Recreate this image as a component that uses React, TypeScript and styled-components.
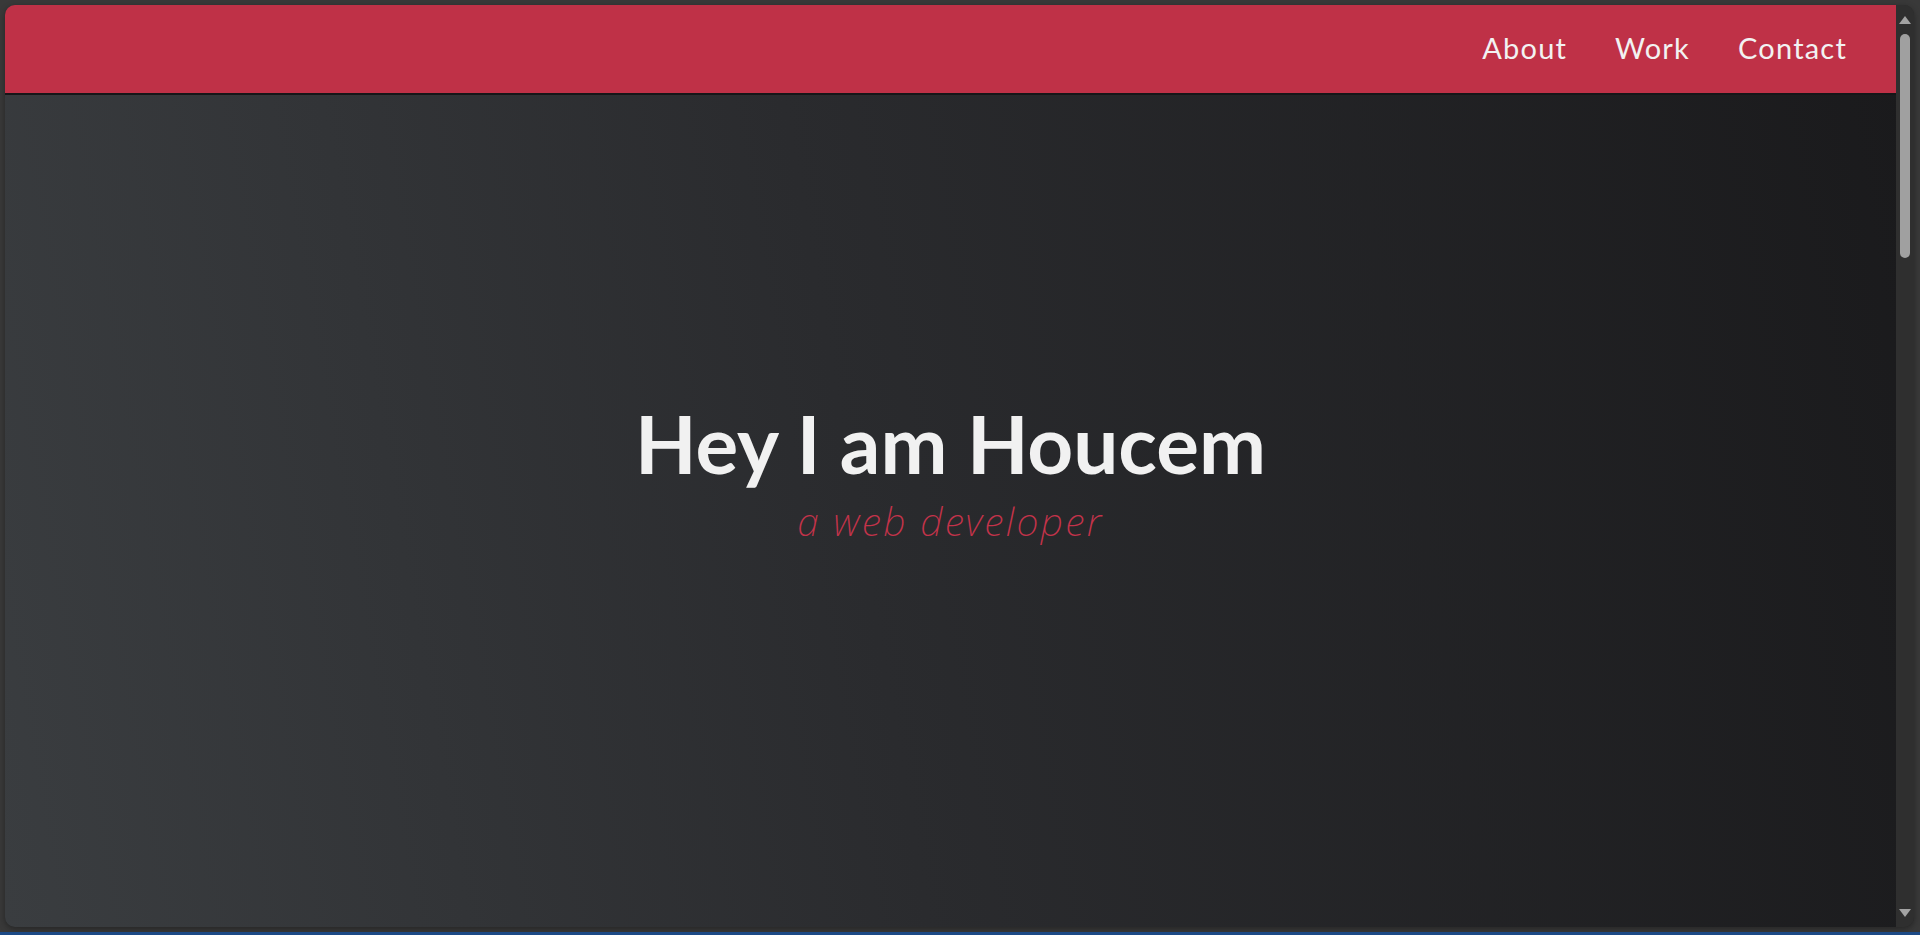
import React from "react";
import styled, { createGlobalStyle } from "styled-components";

const Global = createGlobalStyle`
  html, body { margin: 0; padding: 0; height: 100%; }
  body { background: #383838; overflow: hidden; font-family: "Lato", "Noto Sans", sans-serif; }
  #root { height: 100%; }
  * { box-sizing: border-box; }
`;

const Desktop = styled.div`
  height: 935px;
  display: flex;
  flex-direction: column;
  background: #393939;
`;

const Frame = styled.div`
  flex: 1;
  display: flex;
  padding: 5px 6px 5px 5px;
  min-height: 0;
`;

const Window = styled.div`
  flex: 1;
  display: flex;
  border-radius: 10px;
  overflow: hidden;
  box-shadow: 0 2px 6px rgba(0, 0, 0, 0.35);
  background: #2b2b2b;
`;

const Page = styled.div`
  position: relative;
  flex: 1;
  display: flex;
  flex-direction: column;
  min-width: 0;
`;

const Header = styled.header`
  position: absolute;
  top: 0;
  left: 0;
  right: 0;
  height: 90px;
  background: #bf3147;
  border-bottom: 2px solid #161618;
  display: flex;
  justify-content: flex-end;
  align-items: center;
  padding: 0 25px 3px 0;
  z-index: 2;
`;

const NavLink = styled.a`
  font-family: "Lato", sans-serif;
  font-size: 29px;
  font-weight: 400;
  color: #f2f2f2;
  text-decoration: none;
  padding: 0 24px;
  letter-spacing: 1.2px;
`;

const Hero = styled.main`
  flex: 1;
  display: flex;
  flex-direction: column;
  align-items: center;
  justify-content: center;
  padding-top: 12px;
  background: linear-gradient(80deg, #3a3d40 0%, #2a2b2e 45%, #1a1a1c 100%);
`;

const Title = styled.h1`
  margin: 0;
  font-family: "Lato", sans-serif;
  font-weight: 700;
  font-size: 80px;
  line-height: 1.1;
  color: #f1f1f1;
`;

const Subtitle = styled.p`
  margin: 11px 0 0;
  font-family: "Noto Sans", sans-serif;
  font-weight: 200;
  font-style: italic;
  font-size: 39px;
  line-height: 1.2;
  letter-spacing: 2.3px;
  color: #c3334a;
`;

const Scrollbar = styled.div`
  width: 18px;
  background: #2f2f2f;
  display: flex;
  flex-direction: column;
  align-items: center;
  padding: 11px 0 10px;
`;

const Arrow = styled.div<{ $down?: boolean }>`
  width: 0;
  height: 0;
  border-left: 6px solid transparent;
  border-right: 6px solid transparent;
  ${(p) =>
    p.$down
      ? "border-top: 8px solid #a3a3a3; margin-top: auto;"
      : "border-bottom: 8px solid #a3a3a3;"}
`;

const Thumb = styled.div`
  width: 10px;
  height: 224px;
  margin-top: 10px;
  border-radius: 5px;
  background: #a0a0a0;
`;

const TaskStrip = styled.div`
  height: 3px;
  background: #1c4a86;
`;

export default function App() {
  return (
    <>
      <Global />
      <Desktop>
        <Frame>
          <Window>
            <Page>
              <Header>
                <NavLink href="#about">About</NavLink>
                <NavLink href="#work">Work</NavLink>
                <NavLink href="#contact">Contact</NavLink>
              </Header>
              <Hero>
                <Title>Hey I am Houcem</Title>
                <Subtitle>a web developer</Subtitle>
              </Hero>
            </Page>
            <Scrollbar>
              <Arrow />
              <Thumb />
              <Arrow $down />
            </Scrollbar>
          </Window>
        </Frame>
        <TaskStrip />
      </Desktop>
    </>
  );
}
